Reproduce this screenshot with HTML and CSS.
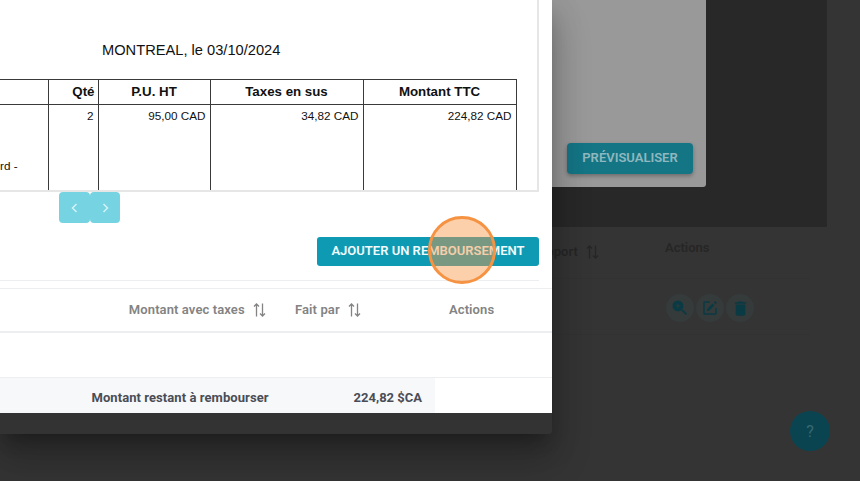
FILE: index.html
```html
<!DOCTYPE html>
<html lang="fr">
<head>
    <meta charset="UTF-8">
    <meta name="viewport" content="width=device-width, initial-scale=1.0">
    <title>Remboursement</title>
    <link rel="stylesheet" href="styles.css">
</head>
<body>
    <svg class="defs" width="0" height="0">
        <symbol id="sort" viewBox="0 0 13 14">
            <path d="M3.5 13.5V1M1 3.5L3.5 1L6 3.5M9.5 .5V13M7 10.5L9.5 13L12 10.5" fill="none" stroke="currentColor" stroke-width="1.3"/>
        </symbol>
    </svg>

    <div class="page">
        <div class="back-modal">
            <div class="preview">
                <button class="btn-preview">PRÉVISUALISER</button>
            </div>
        </div>
        <div class="back-table">
            <div class="back-head">
                <span class="back-col-report">Rapport <svg class="sort-icon"><use href="#sort"/></svg></span>
                <span class="back-col-actions">Actions</span>
            </div>
            <div class="back-row">
                <span class="round-btn">
                    <svg viewBox="0 0 24 24" width="20" height="20"><path d="M15.5 14h-.79l-.28-.27A6.47 6.47 0 0 0 16 9.5 6.5 6.5 0 1 0 9.5 16c1.61 0 3.09-.59 4.23-1.57l.27.28v.79l5 4.99L20.49 19l-4.99-5zM12 10h-2v2H9v-2H7V9h2V7h1v2h2v1z" fill="currentColor"/></svg>
                </span>
                <span class="round-btn">
                    <svg viewBox="0 0 24 24" width="18" height="18"><path d="M5 21h14a2 2 0 0 0 2-2v-7h-2v7H5V5h7V3H5a2 2 0 0 0-2 2v14a2 2 0 0 0 2 2zM8 13.5V16h2.5l7.4-7.4-2.5-2.5L8 13.5zM20.7 5.8a.9.9 0 0 0 0-1.3l-1.2-1.2a.9.9 0 0 0-1.3 0l-1.1 1.1 2.5 2.5 1.1-1.1z" fill="currentColor"/></svg>
                </span>
                <span class="round-btn">
                    <svg viewBox="0 0 24 24" width="19" height="19"><path d="M6 19c0 1.1.9 2 2 2h8c1.1 0 2-.9 2-2V7H6v12zM19 4h-3.5l-1-1h-5l-1 1H5v2h14V4z" fill="currentColor"/></svg>
                </span>
            </div>
        </div>
    </div>

    <button class="help-btn">?</button>

    <div class="dialog">
        <div class="dialog-body">
            <div class="viewer">
                <p class="invoice-date">MONTREAL, le 03/10/2024</p>
                <table class="invoice">
                    <tr>
                        <th class="col-desc"></th>
                        <th class="col-qty">Qté</th>
                        <th class="col-unit">P.U. HT</th>
                        <th class="col-tax">Taxes en sus</th>
                        <th class="col-total">Montant TTC</th>
                    </tr>
                    <tr>
                        <td class="desc-cell">rd -</td>
                        <td>2</td>
                        <td>95,00 CAD</td>
                        <td>34,82 CAD</td>
                        <td>224,82 CAD</td>
                    </tr>
                </table>
            </div>

            <div class="pager">
                <button class="pager-btn">
                    <svg viewBox="0 0 12 12" width="12" height="12"><path d="M7.5 2L3.5 6L7.5 10" fill="none" stroke="currentColor" stroke-width="1.5"/></svg>
                </button>
                <button class="pager-btn">
                    <svg viewBox="0 0 12 12" width="12" height="12"><path d="M4.5 2L8.5 6L4.5 10" fill="none" stroke="currentColor" stroke-width="1.5"/></svg>
                </button>
            </div>

            <div class="add-row">
                <button class="btn-add">AJOUTER UN REMBOURSEMENT</button>
            </div>

            <div class="refund-head">
                <span class="col-amount">Montant avec taxes <svg class="sort-icon"><use href="#sort"/></svg></span>
                <span class="col-by">Fait par <svg class="sort-icon"><use href="#sort"/></svg></span>
                <span class="col-actions">Actions</span>
            </div>

            <div class="refund-empty"></div>

            <div class="refund-foot">
                <div class="foot-cells">
                    <span class="foot-label">Montant restant à rembourser</span>
                    <span class="foot-amount">224,82 $CA</span>
                </div>
            </div>
        </div>
    </div>

    <div class="click-marker"></div>
</body>
</html>
```

FILE: styles.css
```css
* {
    margin: 0;
    padding: 0;
    box-sizing: border-box;
}

body {
    font-family: 'Roboto', sans-serif;
    background: #343434;
    width: 860px;
    height: 481px;
    overflow: hidden;
    position: relative;
}

button {
    border: none;
    font-family: inherit;
}

.defs {
    position: absolute;
}

.sort-icon {
    width: 13px;
    height: 14px;
    margin-left: 5px;
    vertical-align: -3px;
}

/* page behind the dialog */
.back-modal {
    width: 827px;
    height: 227px;
    background: #282828;
    padding-left: 552px;
}

.preview {
    width: 154px;
    height: 187px;
    background: #999;
    border-radius: 0 0 3px 0;
    padding: 143px 13px 0 15px;
}

.btn-preview {
    width: 126px;
    height: 31px;
    padding-bottom: 2px;
    background: #147585;
    color: #8fb8bf;
    border-radius: 4px;
    font-size: 13px;
    font-weight: 600;
    box-shadow: 0 2px 4px rgba(0, 0, 0, 0.3);
}

.back-table {
    width: 810px;
    color: #262626;
    font-size: 13px;
    font-weight: 600;
}

.back-head {
    display: flex;
    height: 52px;
    border-bottom: 1px solid #323232;
}

.back-col-report {
    width: 599px;
    padding-top: 17px;
    text-align: right;
}

.back-col-actions {
    padding: 13px 0 0 66px;
}

.back-row {
    display: flex;
    gap: 2px;
    height: 56px;
    padding: 15px 0 0 666px;
    border-bottom: 1px solid #323232;
}

.round-btn {
    width: 28px;
    height: 28px;
    border-radius: 50%;
    background: #353a3a;
    color: #0a3a44;
    display: flex;
    align-items: center;
    justify-content: center;
}

.help-btn {
    position: absolute;
    left: 790px;
    top: 411px;
    width: 40px;
    height: 40px;
    border-radius: 50%;
    background: #0a4450;
    color: #376a74;
    font-size: 16px;
}

/* dialog */
.dialog {
    position: absolute;
    left: 0;
    top: 0;
    width: 552px;
    height: 434px;
    background: #333;
    border-radius: 0 0 3px 0;
    box-shadow: 0 11px 15px -7px rgba(0, 0, 0, 0.25), 0 24px 38px 3px rgba(0, 0, 0, 0.2), 0 9px 30px 4px rgba(0, 0, 0, 0.1);
}

.dialog-body {
    height: 413px;
    background: #fff;
    overflow: hidden;
}

.viewer {
    width: 539px;
    height: 192px;
    border-right: 2px solid #e6e6e6;
    border-bottom: 2px solid #e6e6e6;
    font-family: 'Liberation Sans', sans-serif;
    color: #111;
    overflow: hidden;
}

.invoice-date {
    padding: 42px 0 0 102px;
    font-size: 14.67px;
    line-height: 16px;
}

.invoice {
    margin-top: 21px;
    width: 516px;
    border-collapse: collapse;
    table-layout: fixed;
    font-size: 11.7px;
}

.invoice th,
.invoice td {
    border: 1px solid #3a3a3a;
}

.invoice th {
    height: 25px;
    padding-bottom: 2px;
    font-size: 13.3px;
}

.invoice td {
    height: 90px;
    vertical-align: top;
    text-align: right;
    padding: 4px 4px 0 0;
    line-height: 14px;
}

.invoice .col-desc {
    border-left: none;
    width: 48px;
}

.col-qty { width: 50px; text-align: right; padding-right: 3px; }
.col-unit { width: 112px; }
.col-tax { width: 153px; }
.col-total { width: 153px; }

.invoice .desc-cell {
    border-left: none;
    text-align: left;
    padding: 54px 0 0 0;
}

.pager {
    display: flex;
    padding-left: 59px;
}

.pager-btn {
    width: 31px;
    height: 31px;
    background: #76d3e2;
    color: #d4f2f6;
    border-radius: 4px;
    display: flex;
    align-items: center;
    justify-content: center;
}

.pager-btn + .pager-btn {
    width: 30px;
}

.add-row {
    display: flex;
    justify-content: flex-end;
    width: 539px;
    margin-top: 14px;
    height: 44px;
    border-bottom: 1px solid #eceef0;
}

.btn-add {
    width: 222px;
    height: 29px;
    padding-bottom: 2px;
    background: #0f9ab3;
    color: #f2fbfd;
    border-radius: 3px;
    font-size: 13px;
    font-weight: 600;
}

.refund-head {
    display: flex;
    align-items: center;
    height: 45px;
    margin-top: 7px;
    padding-bottom: 1px;
    border-top: 1px solid #eceef0;
    border-bottom: 2px solid #eceef0;
    font-size: 13px;
    font-weight: 600;
    letter-spacing: 0.1px;
    color: #838383;
}

.col-amount {
    width: 266px;
    text-align: right;
}

.col-by {
    width: 95px;
    text-align: right;
}

.col-actions {
    padding-left: 88px;
}

.refund-empty {
    height: 45px;
    border-bottom: 1px solid #eceef0;
}

.refund-foot {
    height: 36px;
}

.foot-cells {
    display: flex;
    align-items: center;
    justify-content: flex-end;
    width: 435px;
    height: 36px;
    padding: 2px 13px 0 0;
    background: #f6f8fa;
    font-size: 13px;
    font-weight: 700;
    color: #4a4d55;
}

.foot-label {
    letter-spacing: 0.07px;
}

.foot-amount {
    margin-left: 85px;
}

.click-marker {
    position: absolute;
    left: 428px;
    top: 216px;
    width: 68px;
    height: 68px;
    border-radius: 50%;
    border: 3px solid #f59342;
    background: rgba(250, 150, 70, 0.45);
}
```
